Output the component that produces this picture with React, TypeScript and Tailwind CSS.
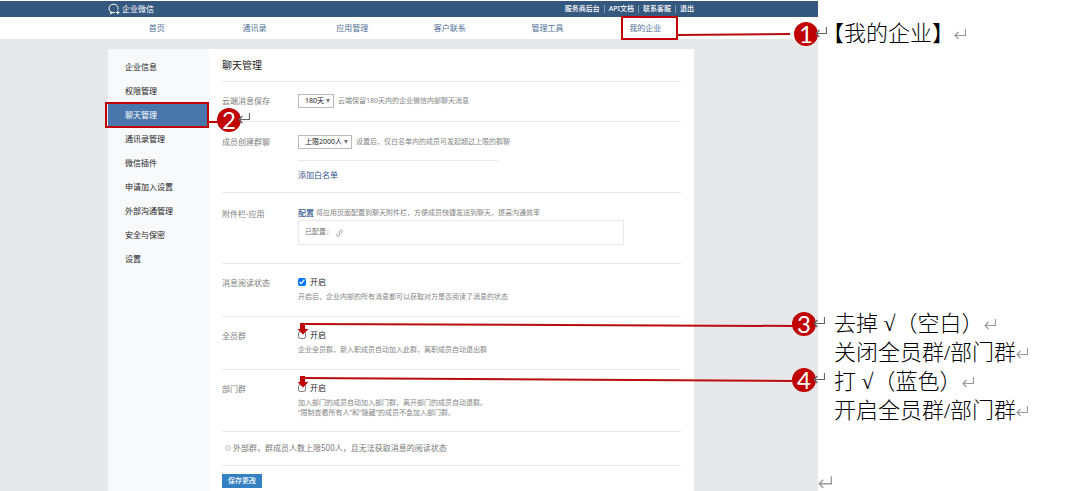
import type { ReactNode } from 'react';
import clsx from 'clsx';

const topLinks = ['服务商后台', 'API文档', '联系客服', '退出'];
const tabs = ['首页', '通讯录', '应用管理', '客户联系', '管理工具', '我的企业'];
const menu = ['企业信息', '权限管理', '聊天管理', '通讯录管理', '微信插件', '申请加入设置', '外部沟通管理', '安全与保密', '设置'];

function ReturnMark({ className = 'w-3 h-3 text-[#999]' }: { className?: string }) {
  return (
    <svg viewBox="0 0 12 12" className={clsx('shrink-0', className)} fill="none" stroke="currentColor" aria-hidden="true">
      <path d="M11.500 1v6.500H1M4.500 4 1 7.500 4.500 11" strokeWidth="1.200" />
    </svg>
  );
}

function Badge({ n, className }: { n: number; className: string }) {
  return (
    <div className={clsx('absolute w-6 h-6 rounded-full bg-[#c00000] text-white text-[24px] leading-6 text-center font-[Lato,sans-serif]', className)}>
      {n}
      <ReturnMark className="absolute w-3 h-3 left-[21px] top-1 text-[#666]" />
    </div>
  );
}

// Connector that stretches with the panel and drops slightly towards its badge
function Line({ className, from, to }: { className: string; from: number; to: number }) {
  return (
    <div className={clsx('absolute h-2', className)}>
      <svg viewBox="0 0 100 8" preserveAspectRatio="none" className="block w-full h-full" aria-hidden="true">
        <path d={`M0 ${from}L100 ${to}`} stroke="#b80d10" strokeWidth="2" vectorEffect="non-scaling-stroke" />
      </svg>
    </div>
  );
}

function DownArrow() {
  return (
    <svg viewBox="0 0 12 12" className="absolute -left-px -top-1.5 w-3 h-3" aria-hidden="true">
      <path d="M3 0h5v6h3.500L6 11.500.500 6H3z" fill="#c00000" />
    </svg>
  );
}

function Section({ id, label, className, children }: { id?: string; label: string; className: string; children: ReactNode }) {
  return (
    <section className={clsx('flex border-b border-[#eaebed]', className)}>
      <label htmlFor={id} className="w-[76px] shrink-0 text-[8px] leading-3.5 text-[#7d7d7d]">{label}</label>
      <div className="flex-1">{children}</div>
    </section>
  );
}

function Picker({ id, value, hint, width }: { id: string; value: string; hint: string; width: string }) {
  return (
    <div className="flex items-center gap-1">
      <div className={clsx('relative', width)}>
        <select id={id} className="block w-full h-3.5 appearance-none border border-[#b9b9b9] bg-white pl-1.5 text-[7px] leading-3 text-[#222]">
          <option>{value}</option>
        </select>
        <svg viewBox="0 0 4 4" className="absolute right-1 top-[5px] w-1 h-1" aria-hidden="true">
          <path d="M0 0h4L2 4z" fill="#777" />
        </svg>
      </div>
      <span className="text-[7px] leading-3 text-[#858585]">{hint}</span>
    </div>
  );
}

function Toggle({ id, checked, arrow, children }: { id: string; checked?: boolean; arrow?: boolean; children: ReactNode }) {
  return (
    <>
      <div className="relative flex items-center gap-1 h-3">
        <input id={id} type="checkbox" defaultChecked={checked} className="w-2 h-2" />
        <label htmlFor={id} className="text-[8px] leading-3 text-[#222]">开启</label>
        {arrow && <DownArrow />}
      </div>
      <p className="mt-1 text-[7px] leading-[10px] text-[#858585]">{children}</p>
    </>
  );
}

function Note({ children, className }: { children: ReactNode; className?: string }) {
  return (
    <p className={clsx('flex items-center text-[22px] leading-[29px] whitespace-nowrap', className)}>
      {children}
      <ReturnMark />
    </p>
  );
}

function Console() {
  return (
    <div className="relative flex-1 min-w-0 flex flex-col bg-[#e7e8ea]">
      <header className="h-4 bg-[#35587f] pl-[108px] pr-[124px] flex items-center justify-between text-white">
        <div className="flex items-center gap-0.5 text-[8px] leading-3">
          <svg viewBox="0 0 12 12" className="w-3 h-3" fill="none" stroke="currentColor" aria-hidden="true">
            <path d="M7 9.500A4.600 4.300 0 1 1 10 6.500M3 8.800l-.5 2 2.200-1.200" />
            <path d="M9.800 7.800v3.400M8.100 9.500h3.400" strokeWidth="1.200" />
          </svg>
          企业微信
        </div>
        <nav className="flex text-[7px] leading-3 font-medium divide-x divide-[#7e97b4]">
          {topLinks.map((link) => (
            <a key={link} href="#" className="px-1 last:pr-0 leading-2">{link}</a>
          ))}
        </nav>
      </header>

      <nav className="h-[22px] bg-white pl-[108px] pr-[124px] grid grid-cols-6">
        {tabs.map((tab) => (
          <div key={tab} className="relative flex justify-center">
            <a href="#" className={clsx('text-[8px] leading-[22px] text-[#4f6f98]', tab === '我的企业' && 'px-2 border-b border-[#35587f]')}>{tab}</a>
            {tab === '我的企业' && <div className="absolute left-[25px] -top-px w-[57px] h-6 border-2 border-[#c00000]" />}
          </div>
        ))}
      </nav>

      <div className="flex-1 mt-2.5 ml-[108px] mr-[124px] flex bg-white">
        <aside className="w-[101px] shrink-0 bg-[#f8f9fb] pt-1.5">
          {menu.map((item) => (
            <div key={item} className="relative">
              <a
                href="#"
                className={clsx('block pl-[17px] text-[8px] leading-6', item === '聊天管理' ? 'bg-[#4976ab] text-white' : 'text-[#222]')}
              >
                {item}
              </a>
              {item === '聊天管理' && (
                <>
                  <div className="absolute -left-[3px] right-0 -top-px h-[26px] border-2 border-[#c00000]" />
                  <div className="absolute left-full top-[18px] w-3 h-0.5 bg-[#c00000]" />
                  <Badge n={2} className="left-[109px] top-[5px]" />
                </>
              )}
            </div>
          ))}
        </aside>

        <main className="flex-1 px-[13px] pb-[3px]">
          <h1 className="text-[10px] leading-8 text-[#222] border-b border-[#eaebed]">聊天管理</h1>

          <Section id="storage" label="云端消息保存" className="pt-3 pb-[13px]">
            <Picker id="storage" value="180天" hint="云端保留180天内的企业微信内部聊天消息" width="w-9" />
          </Section>

          <Section id="limit" label="成员创建群聊" className="pt-[13px] pb-[11px]">
            <Picker id="limit" value="上限2000人" hint="设置后，仅白名单内的成员可发起超过上限的群聊" width="w-[54px]" />
            <div className="mt-[11px] w-[200px] border-t border-[#e3e7ef]" />
            <a href="#" className="block mt-2 text-[8px] leading-3 text-[#2f5590]">添加白名单</a>
          </Section>

          <Section label="附件栏-应用" className="pt-3.5 pb-[18px]">
            <p className="flex gap-0.5 text-[7px] leading-3 text-[#858585]">
              <a href="#" className="text-[8px] font-medium text-[#2f5590]">配置</a>
              将应用页面配置到聊天附件栏，方便成员快捷发送到聊天，提高沟通效率
            </p>
            <div className="mt-px mr-[57px] h-[25px] border border-[#e8e8ea] px-1.5 flex items-center gap-0.5 text-[7px] text-[#777]">
              已配置：
              <svg viewBox="0 0 8 8" className="w-2 h-2" fill="none" stroke="#999" strokeWidth="0.800" aria-hidden="true">
                <path d="M3.500 3.500 5 1.500a1.200 1.200 0 0 1 2 1.500L5.500 4.500M4.500 3.500v2.500a1.500 1.500 0 1 1-2-1.500" />
              </svg>
            </div>
          </Section>

          <Section id="read" label="消息阅读状态" className="pt-3 pb-3.5">
            <Toggle id="read" checked>开启后，企业内部的所有消息都可以获取对方是否阅读了消息的状态</Toggle>
          </Section>

          <Section id="everyone" label="全员群" className="pt-3 pb-3.5">
            <Toggle id="everyone" arrow>企业全员群，新入职成员自动加入此群，离职成员自动退出群</Toggle>
          </Section>

          <Section id="department" label="部门群" className="pt-3 pb-[13px]">
            <Toggle id="department" arrow>
              加入部门的成员自动加入部门群，离开部门的成员自动退群。
              <br />
              “限制查看所有人”和“隐藏”的成员不会加入部门群。
            </Toggle>
          </Section>

          <p className="flex items-center gap-0.5 pl-[3px] pt-2.5 pb-[11px] border-b border-[#eaebed] text-[8px] leading-3 text-[#777]">
            <svg viewBox="0 0 6 6" className="w-1.5 h-1.5" fill="none" stroke="#bbb" aria-hidden="true">
              <circle cx="3" cy="3" r="2.500" strokeWidth="0.800" />
              <path d="M3 1.500v3" strokeWidth="0.800" />
            </svg>
            外部群，群成员人数上限500人，且无法获取消息的阅读状态
          </p>

          <button type="button" className="block mt-2 w-10 h-3.5 bg-[#3580c3] text-white text-[7px] leading-3 font-medium">保存更改</button>
        </main>
      </div>

      {/* callouts */}
      <Line className="left-[678px] right-7 top-[29px]" from={5} to={4} />
      <Badge n={1} className="right-0 top-[21px]" />
      <Line className="left-[301px] right-6 top-[320px]" from={3} to={5} />
      <Badge n={3} className="right-0.5 top-[311px]" />
      <Line className="left-[301px] right-6 top-[375px]" from={2} to={5} />
      <Badge n={4} className="right-0.5 top-[367px]" />
    </div>
  );
}

export default function App() {
  return (
    <div className="flex min-h-screen bg-white pt-px font-['Noto_Sans','Noto_Sans_CJK_SC',sans-serif]">
      <Console />
      <aside className="w-[255px] shrink-0 flex flex-col text-black font-light font-['Liberation_Serif','Noto_Sans_CJK_SC',serif]">
        <Note className="pl-1 pt-[18px]">【我的企业】</Note>
        <div className="mt-[261px] pl-4">
          <Note>去掉 √（空白）</Note>
          <Note>关闭全员群/部门群</Note>
          <Note>打 √（蓝色）</Note>
          <Note>开启全员群/部门群</Note>
        </div>
        <div className="mt-auto pb-0.5">
          <ReturnMark className="w-3.5 h-3.5 text-[#999]" />
        </div>
      </aside>
    </div>
  );
}
